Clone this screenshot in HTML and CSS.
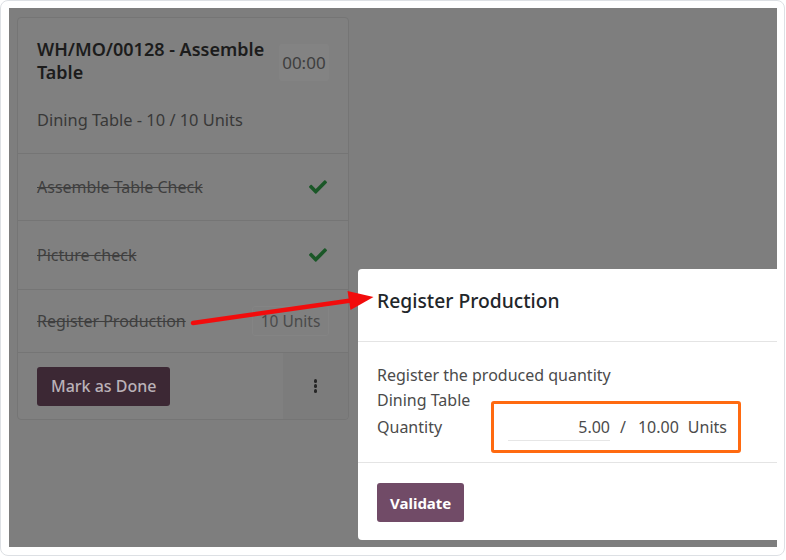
FILE: index.html
```html
<!DOCTYPE html>
<html lang="en">
<head>
<meta charset="utf-8">
<title>Register Production</title>
<link rel="stylesheet" href="styles.css">
</head>
<body>
<div class="frame">
  <div class="screen">
    <div class="card">
      <div class="card-head">
        <div class="title-row">
          <div class="title">WH/MO/00128 - Assemble Table</div>
          <div class="timer">00:00</div>
        </div>
        <div class="product">Dining Table - 10 / 10 Units</div>
      </div>
      <div class="step step-a">
        <span class="done-text">Assemble Table Check</span>
        <svg class="check" viewBox="0 0 512 512"><path d="M173.9 439.4l-166.4-166.4c-10-10-10-26.2 0-36.2l36.2-36.2c10-10 26.2-10 36.2 0L192 312.7 432.1 72.6c10-10 26.2-10 36.2 0l36.2 36.2c10 10 10 26.2 0 36.2l-294.4 294.4c-10 10-26.2 10-36.2 0z"/></svg>
      </div>
      <div class="step step-b">
        <span class="done-text">Picture check</span>
        <svg class="check" viewBox="0 0 512 512"><path d="M173.9 439.4l-166.4-166.4c-10-10-10-26.2 0-36.2l36.2-36.2c10-10 26.2-10 36.2 0L192 312.7 432.1 72.6c10-10 26.2-10 36.2 0l36.2 36.2c10 10 10 26.2 0 36.2l-294.4 294.4c-10 10-26.2 10-36.2 0z"/></svg>
      </div>
      <div class="step step-c">
        <span class="done-text">Register Production</span>
        <span class="badge">10 Units</span>
      </div>
      <div class="card-foot">
        <div class="foot-main"><button class="btn-done">Mark as Done</button></div>
        <div class="foot-more"><span class="kebab"><i></i><i></i><i></i></span></div>
      </div>
    </div>

    <div class="modal">
      <div class="modal-head">Register Production</div>
      <div class="modal-body">
        <div class="line">Register the produced quantity</div>
        <div class="line">Dining Table</div>
        <div class="qty-row">
          <span class="qty-label">Quantity</span>
          <span class="qty-input">5.00</span>
          <span class="qty-sep">/</span>
          <span class="qty-total">10.00</span>
          <span class="qty-unit">Units</span>
        </div>
      </div>
      <div class="modal-foot"><button class="btn-validate">Validate</button></div>
      <div class="highlight"></div>
    </div>

    <svg class="arrow" viewBox="0 0 768 539" width="768" height="539">
      <line x1="184" y1="315" x2="342" y2="292.5" stroke="#f20c0c" stroke-width="4.5" stroke-linecap="round"/>
      <polygon points="341.5,302 364.5,289 338.5,283" fill="#f20c0c"/>
    </svg>
  </div>
</div>
</body>
</html>
```
FILE: styles.css
```css
* { box-sizing: border-box; }
html, body { margin: 0; padding: 0; background: #ffffff; }
body { font-family: "Noto Sans", "Open Sans", Arial, sans-serif; }

.frame {
  width: 785px;
  height: 556px;
  border: 1px solid #dde0e4;
  border-radius: 8px;
  padding: 7px 7px 8px 8px;
  background: #ffffff;
}

.screen {
  position: relative;
  width: 768px;
  height: 539px;
  background: #7e7e7e;
  overflow: hidden;
  padding: 9px 0 0 8px;
}

.card {
  width: 332px;
  background: #808080;
  border: 1px solid #757575;
  border-radius: 4px;
}

.card-head { padding: 20px 19px 22px 19px; }

.title-row {
  display: flex;
  align-items: center;
  justify-content: space-between;
  gap: 10px;
}
.title {
  font-size: 18px;
  font-weight: 600;
  line-height: 23px;
  color: #1c1c1c;
  width: 240px;
}
.timer {
  margin-top: 3px;
  height: 37px;
  width: 52px;
  display: flex;
  align-items: center;
  justify-content: center;
  background: #838383;
  border-radius: 3px;
  font-size: 17px;
  color: #3e3e3e;
}
.product {
  margin-top: 24px;
  font-size: 16.4px;
  line-height: 23px;
  color: #383838;
}

.step {
  display: flex;
  align-items: center;
  justify-content: space-between;
  padding: 0 21px 0 19px;
  border-top: 1px solid #757575;
}
.step-a { height: 67px; }
.step-b { height: 69px; }
.step-c { height: 63px; padding-right: 19px; }

.done-text {
  font-size: 16px;
  color: #3f3f3f;
  text-decoration: line-through;
}
.check { width: 18px; height: 18px; fill: #1a5727; }

.badge {
  height: 30px;
  width: 77px;
  display: flex;
  align-items: center;
  justify-content: center;
  border: 1px solid #848484;
  border-radius: 3px;
  font-size: 15.5px;
  color: #4a4a4a;
}

.card-foot {
  display: flex;
  height: 67px;
  border-top: 1px solid #757575;
}
.foot-main {
  flex: 1;
  display: flex;
  align-items: center;
  padding-left: 19px;
}
.foot-more {
  width: 65px;
  display: flex;
  align-items: center;
  justify-content: center;
  background: #7c7c7c;
  border-radius: 0 0 4px 0;
}
.kebab { display: flex; flex-direction: column; gap: 1.5px; }
.kebab i { display: block; width: 3.5px; height: 3.5px; border-radius: 50%; background: #262626; }

.btn-done {
  height: 39px;
  padding: 0 13px 0 14px;
  border: 0;
  border-radius: 3px;
  background: #3c2834;
  color: #bab2b8;
  font-family: inherit;
  font-size: 16px;
  font-weight: 500;
}

.modal {
  position: absolute;
  left: 349px;
  top: 261px;
  width: 419px;
  height: 271px;
  background: #ffffff;
  border-radius: 4px 0 0 4px;
}
.modal-head {
  padding: 20px 19px 28px;
  line-height: 24px;
  font-size: 19.3px;
  font-weight: 500;
  color: #22262a;
  border-bottom: 1px solid #e4e4e4;
}
.modal-body {
  padding: 21px 19px 22px;
  font-size: 16px;
  color: #4b4b4b;
  border-bottom: 1px solid #e4e4e4;
}
.line { line-height: 25px; }
.qty-row {
  display: flex;
  align-items: center;
  height: 27px;
}
.qty-label { width: 131px; }
.qty-input {
  width: 102px;
  text-align: right;
  border-bottom: 1px solid #e6e6e6;
  line-height: 26px;
  padding-top: 1px;
}
.qty-sep { margin-left: 10px; }
.qty-total { margin-left: 12px; }
.qty-unit { margin-left: 9px; }

.modal-foot { padding: 20px 19px; }
.btn-validate {
  height: 39px;
  padding: 0 13px;
  border: 0;
  border-radius: 3px;
  background: #714b67;
  color: #ffffff;
  font-family: inherit;
  font-size: 15px;
  font-weight: 700;
}

.highlight {
  position: absolute;
  left: 133px;
  top: 132px;
  width: 250px;
  height: 52px;
  border: 3px solid #ff6a10;
  border-radius: 3px;
}

.arrow {
  position: absolute;
  left: 0;
  top: 0;
  pointer-events: none;
}
```
